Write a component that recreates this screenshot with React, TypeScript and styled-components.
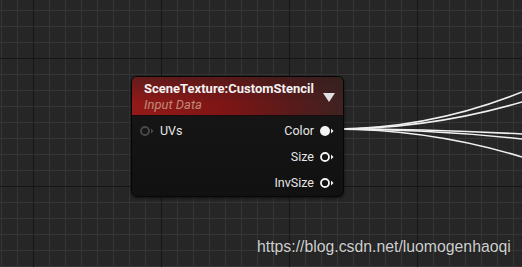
import React from 'react'
import styled, { createGlobalStyle } from 'styled-components'

const GlobalStyle = createGlobalStyle`
  html, body {
    margin: 0;
    padding: 0;
    background: #262626;
  }
`

const Canvas = styled.div`
  position: relative;
  width: 522px;
  height: 267px;
  overflow: hidden;
  background-color: #262626;
  background-image:
    linear-gradient(to right, #161616 1px, transparent 1px),
    linear-gradient(to bottom, #161616 1px, transparent 1px),
    linear-gradient(to right, #353535 1px, transparent 1px),
    linear-gradient(to bottom, #353535 1px, transparent 1px);
  background-size: 128px 128px, 128px 128px, 16px 16px, 16px 16px;
  background-position: 33px 0, 0 58px, 1px 0, 0 10px;
  font-family: Roboto, 'Liberation Sans', Arial, sans-serif;
`

const Wires = styled.svg`
  position: absolute;
  left: 0;
  top: 0;
  width: 522px;
  height: 267px;
`

const Node = styled.div`
  position: absolute;
  left: 131px;
  top: 76px;
  width: 213px;
  height: 121px;
  box-sizing: border-box;
  border: 1px solid #060606;
  border-radius: 6px;
  overflow: hidden;
  display: flex;
  flex-direction: column;
  background: linear-gradient(to bottom, #171717, #111111);
  box-shadow: 0 1px 3px rgba(0, 0, 0, 0.6);
`

const Header = styled.div`
  height: 38px;
  flex-shrink: 0;
  display: flex;
  align-items: center;
  padding: 0 8px 0 12px;
  background:
    linear-gradient(to bottom, rgba(40, 30, 30, 0.45) 0%, rgba(40, 30, 30, 0) 70%),
    linear-gradient(to right, #931a18 0%, #7d1515 45%, #5a1a1a 75%, #3f2222 100%);
  border-bottom: 1px solid #1a0c0c;
`

const Titles = styled.div`
  flex: 1;
  display: flex;
  flex-direction: column;
  gap: 1px;
`

const Title = styled.div`
  color: #f2f2f2;
  font-weight: bold;
  font-size: 13px;
  line-height: 15px;
`

const Subtitle = styled.div`
  color: #c08a78;
  font-style: italic;
  font-size: 13px;
  line-height: 15px;
`

const Caret = styled.div`
  width: 0;
  height: 0;
  margin-top: 2px;
  border-left: 6px solid transparent;
  border-right: 6px solid transparent;
  border-top: 9px solid #e0e0e0;
`

const Body = styled.div`
  flex: 1;
  display: flex;
  justify-content: space-between;
  padding: 2px 8px 0 7px;
`

const PinColumn = styled.div<{ $align: 'start' | 'end' }>`
  display: flex;
  flex-direction: column;
  align-items: ${({ $align }) => ($align === 'start' ? 'flex-start' : 'flex-end')};
`

const PinRow = styled.div`
  height: 26px;
  flex-shrink: 0;
  display: flex;
  align-items: center;
  gap: 5px;
  color: #e6e6e6;
  font-size: 12.5px;
  line-height: 14px;
`

type PinKind = 'in' | 'filled' | 'ring'

const PinIcon: React.FC<{ kind: PinKind }> = ({ kind }) => {
  const ringColor = kind === 'in' ? '#4a4a4a' : '#f2f2f2'
  return (
    <svg width="16" height="12" viewBox="0 0 16 12">
      {kind === 'filled' ? (
        <circle cx="6" cy="6" r="5" fill="#f4f4f4" />
      ) : (
        <circle cx="6" cy="6" r="4" fill={kind === 'in' ? '#161616' : 'none'} stroke={ringColor} strokeWidth="1.8" />
      )}
      <path d="M12 3.5 L14.5 6 L12 8.5 Z" fill={ringColor} />
    </svg>
  )
}

const Watermark = styled.div`
  position: absolute;
  left: 257px;
  top: 237px;
  color: #cfcfcf;
  font-family: 'Liberation Sans', Arial, sans-serif;
  font-size: 15.8px;
  line-height: 20px;
  text-shadow: 0 0 1px rgba(0, 0, 0, 0.5);
`

const wireEnds = [92, 102, 134, 139, 157]

const App: React.FC = () => (
  <>
    <GlobalStyle />
    <Canvas>
      <Wires viewBox="0 0 522 267">
        {wireEnds.map((y) => (
          <path
            key={y}
            d={`M334 129 Q 430 129 522 ${y}`}
            fill="none"
            stroke="#f0f0f0"
            strokeWidth="1.6"
          />
        ))}
      </Wires>
      <Node>
        <Header>
          <Titles>
            <Title>SceneTexture:CustomStencil</Title>
            <Subtitle>Input Data</Subtitle>
          </Titles>
          <Caret />
        </Header>
        <Body>
          <PinColumn $align="start">
            <PinRow>
              <PinIcon kind="in" />
              UVs
            </PinRow>
          </PinColumn>
          <PinColumn $align="end">
            <PinRow>
              Color
              <PinIcon kind="filled" />
            </PinRow>
            <PinRow>
              Size
              <PinIcon kind="ring" />
            </PinRow>
            <PinRow>
              InvSize
              <PinIcon kind="ring" />
            </PinRow>
          </PinColumn>
        </Body>
      </Node>
      <Watermark>https://blog.csdn.net/luomogenhaoqi</Watermark>
    </Canvas>
  </>
)

export default App
